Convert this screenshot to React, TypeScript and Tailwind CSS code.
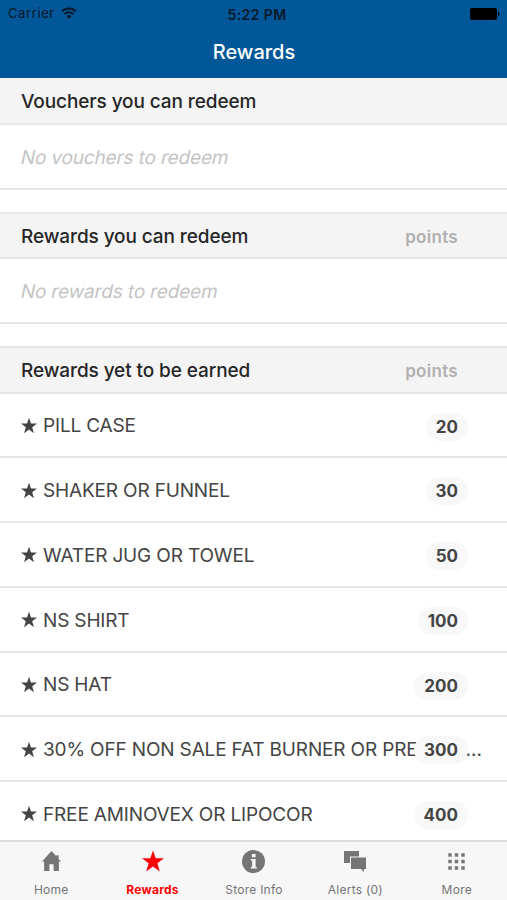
import React from 'react';

interface Reward {
  name: string;
  points: number;
}

interface HeadingProps {
  title: string;
  height: string;
  showPoints?: boolean;
}

const rewards: Reward[] = [
  { name: 'PILL CASE', points: 20 },
  { name: 'SHAKER OR FUNNEL', points: 30 },
  { name: 'WATER JUG OR TOWEL', points: 50 },
  { name: 'NS SHIRT', points: 100 },
  { name: 'NS HAT', points: 200 },
  { name: '30% OFF NON SALE FAT BURNER OR PRE', points: 300 },
  { name: 'FREE AMINOVEX OR LIPOCOR', points: 400 },
];

const Star: React.FC<{ className: string }> = ({ className }) => (
  <svg viewBox="0 0 22 21" className={className} fill="currentColor">
    <path d="M11 0l2.7 7.8H22l-6.6 5 2.4 8.2L11 16l-6.8 5 2.4-8.2L0 7.8h8.3z" />
  </svg>
);

const SectionHeading: React.FC<HeadingProps> = ({ title, height, showPoints }) => (
  <div className={`${height} shrink-0 flex items-center justify-between pt-[3px] pl-[21px] pr-[49px] bg-[#f4f4f4] border-b-2 border-[#e6e6e6]`}>
    <h2 className="text-[19px] leading-6 font-medium text-[#262626] tracking-[-0.1px]">{title}</h2>
    {showPoints && <span className="text-[17px] leading-6 font-semibold text-[#b0b0b0] tracking-[0.3px]">points</span>}
  </div>
);

const EmptyRow: React.FC<{ text: string }> = ({ text }) => (
  <div className="h-[64.5px] shrink-0 flex items-center pt-[3px] pl-[21px] bg-white border-b-2 border-[#e6e6e6]">
    <span className="text-[19px] leading-6 text-[#c4c4c4] tracking-[-0.15px] -skew-x-12">{text}</span>
  </div>
);

const RewardRow: React.FC<{ reward: Reward }> = ({ reward }) => (
  <div className="relative h-[64.75px] shrink-0 flex items-center pt-[3px] pl-[21px] pr-[25px] border-b-2 border-[#e6e6e6] text-[#444]">
    <Star className="w-4 h-[17px] mr-1.5 mb-0.5" />
    <span className="text-[19px] leading-6 whitespace-nowrap tracking-[-0.16px]">{reward.name}</span>
    {reward.points === 300 && <span className="ml-auto text-[19px] leading-6">...</span>}
    <span className="absolute right-[39px] top-[19px] h-7 px-2.5 rounded-full bg-[#f8f8f8] text-[17px] leading-7 font-bold">
      {reward.points}
    </span>
  </div>
);

const HomeIcon = () => (
  <svg viewBox="0 0 18 19" className="w-[19px] h-5 ml-px" fill="currentColor">
    <path d="M9 0L0 10h2v9h5v-6.5h4V19h5v-9h2l-2.2-2.4V4h-2.2v1z" />
  </svg>
);

const InfoIcon = () => (
  <svg viewBox="0 0 23 23" className="w-[23px] h-[23px]">
    <circle cx="11.5" cy="11.5" r="11.5" fill="currentColor" />
    <path d="M9.9 4h3.7v3.3H9.9zM8.8 9h4.8v8h1.2v1.5h-6V17h1.3v-6.5H8.8z" fill="#f7f7f7" />
  </svg>
);

const ChatIcon = () => (
  <svg viewBox="0 0 22 21" className="w-[22px] h-[21px]" fill="currentColor">
    <path d="M0 0h15v5.5H6V12H0z" />
    <path d="M7 6.5h15V18h-2v3l-3-3H7z" />
  </svg>
);

const GridIcon = () => (
  <svg viewBox="0 0 17 17" className="w-[17px] h-[17px]" fill="currentColor">
    <path d="M.3 .3h3.4v3.4H.3zM6.8 .3h3.4v3.4H6.8zM13.3 .3h3.4v3.4h-3.4zM.3 6.8h3.4v3.4H.3zM6.8 6.8h3.4v3.4H6.8zM13.3 6.8h3.4v3.4h-3.4zM.3 13.3h3.4v3.4H.3zM6.8 13.3h3.4v3.4H6.8zM13.3 13.3h3.4v3.4h-3.4z" />
  </svg>
);

const tabs = [
  { label: 'Home', icon: <HomeIcon /> },
  { label: 'Rewards', icon: <Star className="w-[22px] h-[22px]" />, active: true },
  { label: 'Store Info', icon: <InfoIcon /> },
  { label: 'Alerts (0)', icon: <ChatIcon /> },
  { label: 'More', icon: <GridIcon /> },
];

const App: React.FC = () => (
  <div className="w-[507px] h-[900px] flex flex-col overflow-hidden bg-white font-['Inter',sans-serif]">
    <header className="h-[78px] shrink-0 bg-[#025798]">
      <div className="h-7 grid grid-cols-3 items-center pl-2 pr-[7px] text-[13px] text-[#06182a]">
        <div className="flex items-center gap-1.5">
          <span className="tracking-[0.6px]">Carrier</span>
          <svg viewBox="0 0 16 12" className="w-4 h-3 mb-0.5" fill="none" stroke="currentColor" strokeWidth="2">
            <path d="M1 4.4a10 10 0 0 1 14 0M3.6 7.2a6.2 6.2 0 0 1 8.8 0" />
            <path d="M8 11.8L5.5 9.2a3.6 3.6 0 0 1 5 0z" fill="currentColor" stroke="none" />
          </svg>
        </div>
        <span className="text-center pl-1.5 text-[14px] font-semibold tracking-[0.4px]">5:22 PM</span>
        <svg viewBox="0 0 30 12" className="w-[30px] h-3 justify-self-end text-black" fill="currentColor">
          <rect width="27" height="12" rx="2" />
          <path d="M28 4c2 .5 2 3.5 0 4z" />
        </svg>
      </div>
      <h1 className="h-12 leading-[49px] pl-px text-center text-[20px] font-medium text-white">Rewards</h1>
    </header>

    <main className="flex-1 min-h-0 flex flex-col overflow-hidden">
      <SectionHeading title="Vouchers you can redeem" height="h-[47px]" />
      <EmptyRow text="No vouchers to redeem" />
      <div className="h-[24px] shrink-0 border-b-2 border-[#e6e6e6]" />
      <SectionHeading title="Rewards you can redeem" height="h-[45.5px]" showPoints />
      <EmptyRow text="No rewards to redeem" />
      <div className="h-[24.5px] shrink-0 border-b-2 border-[#e6e6e6]" />
      <SectionHeading title="Rewards yet to be earned" height="h-[45.5px]" showPoints />
      {rewards.map((reward) => (
        <RewardRow key={reward.name} reward={reward} />
      ))}
    </main>

    <nav className="h-[60px] shrink-0 grid grid-cols-5 border-t-2 border-[#dcdcdc] bg-[#f7f7f7]">
      {tabs.map((tab) => (
        <div key={tab.label} className={`flex flex-col items-center pl-px ${tab.active ? 'text-[#ff0000]' : 'text-[#757575]'}`}>
          <div className="h-[38px] flex items-center">{tab.icon}</div>
          <span className={`text-[12px] leading-5 tracking-[0.25px] ${tab.active ? 'font-bold' : ''}`}>{tab.label}</span>
        </div>
      ))}
    </nav>
  </div>
);

export default App;
